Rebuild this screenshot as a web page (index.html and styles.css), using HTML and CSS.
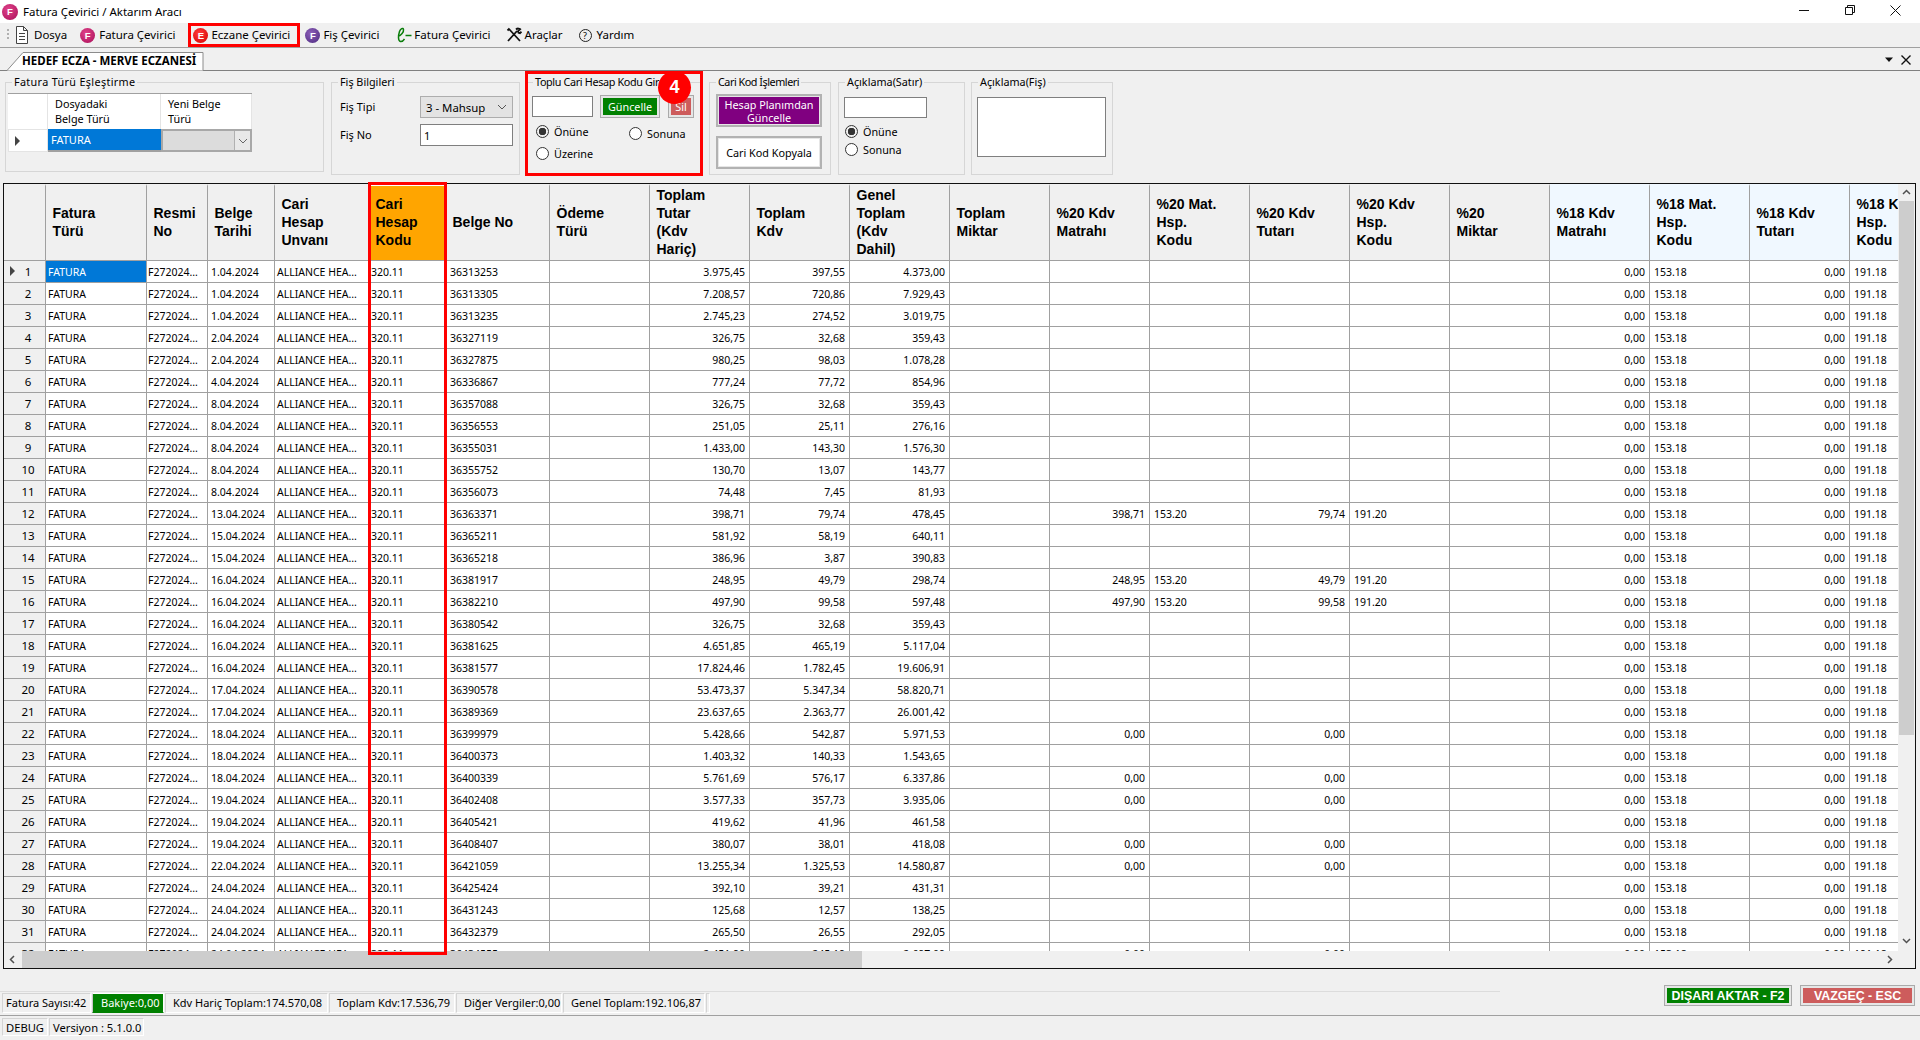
FILE: index.html
```html
<!DOCTYPE html>
<html lang="tr">
<head>
<meta charset="utf-8">
<title>Fatura Çevirici / Aktarım Aracı</title>
<link rel="stylesheet" href="styles.css">
</head>
<body>
<div class="app">
<header class="titlebar">
  <span class="ball ball-f ball-title">F</span>
  <span class="title-text">Fatura Çevirici / Aktarım Aracı</span>
  <div class="winctl">
    <svg width="46" height="20" viewBox="0 0 46 20"><path d="M18 10.5h10" stroke="#111" fill="none"/></svg>
    <svg width="46" height="20" viewBox="0 0 46 20"><path d="M18.5 7.5h7v7h-7zM20.5 7.5v-2h7v7h-2" stroke="#111" fill="none"/></svg>
    <svg width="46" height="20" viewBox="0 0 46 20"><path d="M17.5 5.5l10 10M27.5 5.5l-10 10" stroke="#111" fill="none"/></svg>
  </div>
</header>

<nav class="toolbar">
  <span class="grip"></span>
  <div class="tool tool-doc">
    <svg width="14" height="20" viewBox="0 0 14 20"><path d="M1.5 1.5h7l4 4v13h-11zM8.5 1.5v4h4M4 8.5h6M4 11.5h6M4 14.5h6" fill="#fff" stroke="#444"/></svg>
    <span>Dosya</span>
  </div>
  <div class="tool tool-f"><span class="ball ball-f">F</span><span>Fatura Çevirici</span></div>
  <div class="tool tool-active"><span class="ball ball-e">E</span><span>Eczane Çevirici</span></div>
  <div class="tool tool-p"><span class="ball ball-p">F</span><span>Fiş Çevirici</span></div>
  <div class="tool tool-ef">
    <svg width="18" height="18" viewBox="0 0 18 18"><path d="M3 10.5C6 9.500 9 6 8.500 3.500C8 1.500 5.500 2.500 4.500 5.500C3.200 9.500 2.800 15 5.500 15.500C7 15.700 8.500 14.500 9.500 13M10.500 9.500h6" fill="none" stroke="#0a7d0a" stroke-width="1.500"/></svg>
    <span>Fatura Çevirici</span>
  </div>
  <div class="tool tool-tools">
    <svg width="16" height="16" viewBox="0 0 16 16"><path d="M2 14L11 4M10 2.500c1.500-1.500 3.500-1 4.200-.3l-2.200 2 .5 1.500 1.500.5 1.500-1.500M3 2l11 12M1.500 3.500l2-2" fill="none" stroke="#111" stroke-width="1.800"/></svg>
    <span>Araçlar</span>
  </div>
  <div class="tool tool-help"><span class="help">?</span><span>Yardım</span></div>
</nav>

<div class="tabstrip">
  <div class="tab">
    <svg class="tab-shape" width="197" height="19" viewBox="0 0 197 19"><path d="M0 18.500L16 .5H196V18.500" fill="#fff" stroke="#8c8c8c"/></svg>
    <span class="tab-label">HEDEF ECZA - MERVE ECZANESİ</span>
  </div>
  <div class="tab-tools">
    <svg width="12" height="8" viewBox="0 0 12 8"><path d="M2 1.500h8L6 6z" fill="#111"/></svg>
    <svg width="12" height="12" viewBox="0 0 12 12"><path d="M1.500 1.500l9 9M10.500 1.500l-9 9" stroke="#111" stroke-width="1.400" fill="none"/></svg>
  </div>
</div>

<section class="filters">
  <div class="group g1">
    <span class="legend">Fatura Türü Eşleştirme</span>
    <div class="mini">
      <div class="mini-h"></div>
      <div class="mini-h mini-t">Dosyadaki<br>Belge Türü</div>
      <div class="mini-h mini-t">Yeni Belge<br>Türü</div>
      <div class="mini-r"><span class="cursor"></span></div>
      <div class="mini-sel">FATURA</div>
      <div class="mini-combo"><span class="mini-arrow"><svg width="10" height="6" viewBox="0 0 10 6"><path d="M1 1l4 4 4-4" fill="none" stroke="#666"/></svg></span></div>
    </div>
  </div>

  <div class="group g2">
    <span class="legend">Fiş Bilgileri</span>
    <div class="form">
      <label class="form-label">Fiş Tipi</label>
      <div class="combo"><span>3 - Mahsup</span><svg width="10" height="6" viewBox="0 0 10 6"><path d="M1 1l4 4 4-4" fill="none" stroke="#555"/></svg></div>
      <label class="form-label">Fiş No</label>
      <div class="field field-no">1</div>
    </div>
  </div>

  <div class="group g3">
    <span class="legend">Toplu Cari Hesap Kodu Gir</span>
    <div class="bulk-row">
      <div class="field bulk-input"></div>
      <div class="btn btn-guncelle"><span class="btn-in green">Güncelle</span></div>
      <div class="btn btn-sil"><span class="btn-in red">Sil</span></div>
    </div>
    <div class="radios">
      <div class="radio-line"><span class="radio on"></span><span>Önüne</span></div>
      <div class="radio-line radio-down"><span class="radio"></span><span>Sonuna</span></div>
      <div class="radio-line"><span class="radio"></span><span>Üzerine</span></div>
    </div>
    <span class="mark-box"></span>
    <span class="badge">4</span>
  </div>

  <div class="group g4">
    <span class="legend">Cari Kod İşlemleri</span>
    <div class="btn btn-big"><span class="btn-in purple">Hesap Planımdan<br>Güncelle</span></div>
    <div class="btn btn-big"><span class="btn-in white">Cari Kod Kopyala</span></div>
  </div>

  <div class="group g5">
    <span class="legend">Açıklama(Satır)</span>
    <div class="field satir-input"></div>
    <div class="radio-stack">
      <div class="radio-line"><span class="radio on"></span><span>Önüne</span></div>
      <div class="radio-line"><span class="radio"></span><span>Sonuna</span></div>
    </div>
  </div>

  <div class="group g6">
    <span class="legend">Açıklama(Fiş)</span>
    <div class="field fis-area"></div>
  </div>
</section>

<section class="grid">
  <div class="grid-body">
    <div class="grid-view">
      <table class="table">
        <colgroup><col class="c-rh"><col class="c-a"><col class="c-b"><col class="c-c"><col class="c-d"><col class="c-e"><col class="c-f"><col span="14" class="c-n"></colgroup>
        <thead>
          <tr><th></th><th>Fatura<br>Türü</th><th>Resmi<br>No</th><th>Belge<br>Tarihi</th><th>Cari<br>Hesap<br>Unvanı</th><th class="h-orange">Cari<br>Hesap<br>Kodu</th><th>Belge No</th><th>Ödeme<br>Türü</th><th>Toplam<br>Tutar<br>(Kdv<br>Hariç)</th><th>Toplam<br>Kdv</th><th>Genel<br>Toplam<br>(Kdv<br>Dahil)</th><th>Toplam<br>Miktar</th><th>%20 Kdv<br>Matrahı</th><th>%20 Mat.<br>Hsp.<br>Kodu</th><th>%20 Kdv<br>Tutarı</th><th>%20 Kdv<br>Hsp.<br>Kodu</th><th>%20<br>Miktar</th><th class="h-blue">%18 Kdv<br>Matrahı</th><th class="h-blue">%18 Mat.<br>Hsp.<br>Kodu</th><th class="h-blue">%18 Kdv<br>Tutarı</th><th class="h-blue">%18 Kdv<br>Hsp.<br>Kodu</th></tr>
        </thead>
        <tbody>
<tr><th><span class="cursor"></span>1</th><td class="sel">FATURA</td><td>F272024...</td><td>1.04.2024</td><td>ALLIANCE HEA...</td><td>320.11</td><td>36313253</td><td></td><td>3.975,45</td><td>397,55</td><td>4.373,00</td><td></td><td></td><td></td><td></td><td></td><td></td><td>0,00</td><td>153.18</td><td>0,00</td><td>191.18</td></tr>
<tr><th>2</th><td>FATURA</td><td>F272024...</td><td>1.04.2024</td><td>ALLIANCE HEA...</td><td>320.11</td><td>36313305</td><td></td><td>7.208,57</td><td>720,86</td><td>7.929,43</td><td></td><td></td><td></td><td></td><td></td><td></td><td>0,00</td><td>153.18</td><td>0,00</td><td>191.18</td></tr>
<tr><th>3</th><td>FATURA</td><td>F272024...</td><td>1.04.2024</td><td>ALLIANCE HEA...</td><td>320.11</td><td>36313235</td><td></td><td>2.745,23</td><td>274,52</td><td>3.019,75</td><td></td><td></td><td></td><td></td><td></td><td></td><td>0,00</td><td>153.18</td><td>0,00</td><td>191.18</td></tr>
<tr><th>4</th><td>FATURA</td><td>F272024...</td><td>2.04.2024</td><td>ALLIANCE HEA...</td><td>320.11</td><td>36327119</td><td></td><td>326,75</td><td>32,68</td><td>359,43</td><td></td><td></td><td></td><td></td><td></td><td></td><td>0,00</td><td>153.18</td><td>0,00</td><td>191.18</td></tr>
<tr><th>5</th><td>FATURA</td><td>F272024...</td><td>2.04.2024</td><td>ALLIANCE HEA...</td><td>320.11</td><td>36327875</td><td></td><td>980,25</td><td>98,03</td><td>1.078,28</td><td></td><td></td><td></td><td></td><td></td><td></td><td>0,00</td><td>153.18</td><td>0,00</td><td>191.18</td></tr>
<tr><th>6</th><td>FATURA</td><td>F272024...</td><td>4.04.2024</td><td>ALLIANCE HEA...</td><td>320.11</td><td>36336867</td><td></td><td>777,24</td><td>77,72</td><td>854,96</td><td></td><td></td><td></td><td></td><td></td><td></td><td>0,00</td><td>153.18</td><td>0,00</td><td>191.18</td></tr>
<tr><th>7</th><td>FATURA</td><td>F272024...</td><td>8.04.2024</td><td>ALLIANCE HEA...</td><td>320.11</td><td>36357088</td><td></td><td>326,75</td><td>32,68</td><td>359,43</td><td></td><td></td><td></td><td></td><td></td><td></td><td>0,00</td><td>153.18</td><td>0,00</td><td>191.18</td></tr>
<tr><th>8</th><td>FATURA</td><td>F272024...</td><td>8.04.2024</td><td>ALLIANCE HEA...</td><td>320.11</td><td>36356553</td><td></td><td>251,05</td><td>25,11</td><td>276,16</td><td></td><td></td><td></td><td></td><td></td><td></td><td>0,00</td><td>153.18</td><td>0,00</td><td>191.18</td></tr>
<tr><th>9</th><td>FATURA</td><td>F272024...</td><td>8.04.2024</td><td>ALLIANCE HEA...</td><td>320.11</td><td>36355031</td><td></td><td>1.433,00</td><td>143,30</td><td>1.576,30</td><td></td><td></td><td></td><td></td><td></td><td></td><td>0,00</td><td>153.18</td><td>0,00</td><td>191.18</td></tr>
<tr><th>10</th><td>FATURA</td><td>F272024...</td><td>8.04.2024</td><td>ALLIANCE HEA...</td><td>320.11</td><td>36355752</td><td></td><td>130,70</td><td>13,07</td><td>143,77</td><td></td><td></td><td></td><td></td><td></td><td></td><td>0,00</td><td>153.18</td><td>0,00</td><td>191.18</td></tr>
<tr><th>11</th><td>FATURA</td><td>F272024...</td><td>8.04.2024</td><td>ALLIANCE HEA...</td><td>320.11</td><td>36356073</td><td></td><td>74,48</td><td>7,45</td><td>81,93</td><td></td><td></td><td></td><td></td><td></td><td></td><td>0,00</td><td>153.18</td><td>0,00</td><td>191.18</td></tr>
<tr><th>12</th><td>FATURA</td><td>F272024...</td><td>13.04.2024</td><td>ALLIANCE HEA...</td><td>320.11</td><td>36363371</td><td></td><td>398,71</td><td>79,74</td><td>478,45</td><td></td><td>398,71</td><td>153.20</td><td>79,74</td><td>191.20</td><td></td><td>0,00</td><td>153.18</td><td>0,00</td><td>191.18</td></tr>
<tr><th>13</th><td>FATURA</td><td>F272024...</td><td>15.04.2024</td><td>ALLIANCE HEA...</td><td>320.11</td><td>36365211</td><td></td><td>581,92</td><td>58,19</td><td>640,11</td><td></td><td></td><td></td><td></td><td></td><td></td><td>0,00</td><td>153.18</td><td>0,00</td><td>191.18</td></tr>
<tr><th>14</th><td>FATURA</td><td>F272024...</td><td>15.04.2024</td><td>ALLIANCE HEA...</td><td>320.11</td><td>36365218</td><td></td><td>386,96</td><td>3,87</td><td>390,83</td><td></td><td></td><td></td><td></td><td></td><td></td><td>0,00</td><td>153.18</td><td>0,00</td><td>191.18</td></tr>
<tr><th>15</th><td>FATURA</td><td>F272024...</td><td>16.04.2024</td><td>ALLIANCE HEA...</td><td>320.11</td><td>36381917</td><td></td><td>248,95</td><td>49,79</td><td>298,74</td><td></td><td>248,95</td><td>153.20</td><td>49,79</td><td>191.20</td><td></td><td>0,00</td><td>153.18</td><td>0,00</td><td>191.18</td></tr>
<tr><th>16</th><td>FATURA</td><td>F272024...</td><td>16.04.2024</td><td>ALLIANCE HEA...</td><td>320.11</td><td>36382210</td><td></td><td>497,90</td><td>99,58</td><td>597,48</td><td></td><td>497,90</td><td>153.20</td><td>99,58</td><td>191.20</td><td></td><td>0,00</td><td>153.18</td><td>0,00</td><td>191.18</td></tr>
<tr><th>17</th><td>FATURA</td><td>F272024...</td><td>16.04.2024</td><td>ALLIANCE HEA...</td><td>320.11</td><td>36380542</td><td></td><td>326,75</td><td>32,68</td><td>359,43</td><td></td><td></td><td></td><td></td><td></td><td></td><td>0,00</td><td>153.18</td><td>0,00</td><td>191.18</td></tr>
<tr><th>18</th><td>FATURA</td><td>F272024...</td><td>16.04.2024</td><td>ALLIANCE HEA...</td><td>320.11</td><td>36381625</td><td></td><td>4.651,85</td><td>465,19</td><td>5.117,04</td><td></td><td></td><td></td><td></td><td></td><td></td><td>0,00</td><td>153.18</td><td>0,00</td><td>191.18</td></tr>
<tr><th>19</th><td>FATURA</td><td>F272024...</td><td>16.04.2024</td><td>ALLIANCE HEA...</td><td>320.11</td><td>36381577</td><td></td><td>17.824,46</td><td>1.782,45</td><td>19.606,91</td><td></td><td></td><td></td><td></td><td></td><td></td><td>0,00</td><td>153.18</td><td>0,00</td><td>191.18</td></tr>
<tr><th>20</th><td>FATURA</td><td>F272024...</td><td>17.04.2024</td><td>ALLIANCE HEA...</td><td>320.11</td><td>36390578</td><td></td><td>53.473,37</td><td>5.347,34</td><td>58.820,71</td><td></td><td></td><td></td><td></td><td></td><td></td><td>0,00</td><td>153.18</td><td>0,00</td><td>191.18</td></tr>
<tr><th>21</th><td>FATURA</td><td>F272024...</td><td>17.04.2024</td><td>ALLIANCE HEA...</td><td>320.11</td><td>36389369</td><td></td><td>23.637,65</td><td>2.363,77</td><td>26.001,42</td><td></td><td></td><td></td><td></td><td></td><td></td><td>0,00</td><td>153.18</td><td>0,00</td><td>191.18</td></tr>
<tr><th>22</th><td>FATURA</td><td>F272024...</td><td>18.04.2024</td><td>ALLIANCE HEA...</td><td>320.11</td><td>36399979</td><td></td><td>5.428,66</td><td>542,87</td><td>5.971,53</td><td></td><td>0,00</td><td></td><td>0,00</td><td></td><td></td><td>0,00</td><td>153.18</td><td>0,00</td><td>191.18</td></tr>
<tr><th>23</th><td>FATURA</td><td>F272024...</td><td>18.04.2024</td><td>ALLIANCE HEA...</td><td>320.11</td><td>36400373</td><td></td><td>1.403,32</td><td>140,33</td><td>1.543,65</td><td></td><td></td><td></td><td></td><td></td><td></td><td>0,00</td><td>153.18</td><td>0,00</td><td>191.18</td></tr>
<tr><th>24</th><td>FATURA</td><td>F272024...</td><td>18.04.2024</td><td>ALLIANCE HEA...</td><td>320.11</td><td>36400339</td><td></td><td>5.761,69</td><td>576,17</td><td>6.337,86</td><td></td><td>0,00</td><td></td><td>0,00</td><td></td><td></td><td>0,00</td><td>153.18</td><td>0,00</td><td>191.18</td></tr>
<tr><th>25</th><td>FATURA</td><td>F272024...</td><td>19.04.2024</td><td>ALLIANCE HEA...</td><td>320.11</td><td>36402408</td><td></td><td>3.577,33</td><td>357,73</td><td>3.935,06</td><td></td><td>0,00</td><td></td><td>0,00</td><td></td><td></td><td>0,00</td><td>153.18</td><td>0,00</td><td>191.18</td></tr>
<tr><th>26</th><td>FATURA</td><td>F272024...</td><td>19.04.2024</td><td>ALLIANCE HEA...</td><td>320.11</td><td>36405421</td><td></td><td>419,62</td><td>41,96</td><td>461,58</td><td></td><td></td><td></td><td></td><td></td><td></td><td>0,00</td><td>153.18</td><td>0,00</td><td>191.18</td></tr>
<tr><th>27</th><td>FATURA</td><td>F272024...</td><td>19.04.2024</td><td>ALLIANCE HEA...</td><td>320.11</td><td>36408407</td><td></td><td>380,07</td><td>38,01</td><td>418,08</td><td></td><td>0,00</td><td></td><td>0,00</td><td></td><td></td><td>0,00</td><td>153.18</td><td>0,00</td><td>191.18</td></tr>
<tr><th>28</th><td>FATURA</td><td>F272024...</td><td>22.04.2024</td><td>ALLIANCE HEA...</td><td>320.11</td><td>36421059</td><td></td><td>13.255,34</td><td>1.325,53</td><td>14.580,87</td><td></td><td>0,00</td><td></td><td>0,00</td><td></td><td></td><td>0,00</td><td>153.18</td><td>0,00</td><td>191.18</td></tr>
<tr><th>29</th><td>FATURA</td><td>F272024...</td><td>24.04.2024</td><td>ALLIANCE HEA...</td><td>320.11</td><td>36425424</td><td></td><td>392,10</td><td>39,21</td><td>431,31</td><td></td><td></td><td></td><td></td><td></td><td></td><td>0,00</td><td>153.18</td><td>0,00</td><td>191.18</td></tr>
<tr><th>30</th><td>FATURA</td><td>F272024...</td><td>24.04.2024</td><td>ALLIANCE HEA...</td><td>320.11</td><td>36431243</td><td></td><td>125,68</td><td>12,57</td><td>138,25</td><td></td><td></td><td></td><td></td><td></td><td></td><td>0,00</td><td>153.18</td><td>0,00</td><td>191.18</td></tr>
<tr><th>31</th><td>FATURA</td><td>F272024...</td><td>24.04.2024</td><td>ALLIANCE HEA...</td><td>320.11</td><td>36432379</td><td></td><td>265,50</td><td>26,55</td><td>292,05</td><td></td><td></td><td></td><td></td><td></td><td></td><td>0,00</td><td>153.18</td><td>0,00</td><td>191.18</td></tr>
<tr><th>32</th><td>FATURA</td><td>F272024...</td><td>24.04.2024</td><td>ALLIANCE HEA...</td><td>320.11</td><td>36434555</td><td></td><td>2.451,90</td><td>245,19</td><td>2.697,09</td><td></td><td>0,00</td><td></td><td>0,00</td><td></td><td></td><td>0,00</td><td>153.18</td><td>0,00</td><td>191.18</td></tr>
        </tbody>
      </table>
    </div>
    <div class="vscroll">
      <svg class="sb-btn" width="17" height="17" viewBox="0 0 17 17"><path d="M5 10l3.500-3.500L12 10" fill="none" stroke="#505050" stroke-width="1.500"/></svg>
      <div class="vthumb"></div>
      <svg class="sb-btn sb-end" width="17" height="17" viewBox="0 0 17 17"><path d="M5 7l3.500 3.500L12 7" fill="none" stroke="#505050" stroke-width="1.500"/></svg>
    </div>
  </div>
  <div class="hscroll">
    <svg class="sb-btn" width="17" height="17" viewBox="0 0 17 17"><path d="M10 5L6.500 8.500 10 12" fill="none" stroke="#505050" stroke-width="1.500"/></svg>
    <div class="hthumb"></div>
    <svg class="sb-btn sb-right" width="17" height="17" viewBox="0 0 17 17"><path d="M7 5l3.500 3.500L7 12" fill="none" stroke="#505050" stroke-width="1.500"/></svg>
  </div>
  <span class="col-mark"></span>
</section>

<footer class="summary">
  <div class="stats">
    <span class="stat s1">Fatura Sayısı:42</span>
    <span class="stat s2">Bakiye:0,00</span>
    <span class="stat s3">Kdv Hariç Toplam:174.570,08</span>
    <span class="stat s4">Toplam Kdv:17.536,79</span>
    <span class="stat s5">Diğer Vergiler:0,00</span>
    <span class="stat s6">Genel Toplam:192.106,87</span>
    <span class="stat s7"></span>
  </div>
  <div class="actions">
    <div class="btn btn-aktar"><span class="btn-in green">DIŞARI AKTAR - F2</span></div>
    <div class="btn btn-vazgec"><span class="btn-in red">VAZGEÇ - ESC</span></div>
  </div>
</footer>

<div class="statusbar">
  <span class="stat b1">DEBUG</span>
  <span class="stat b2">Versiyon : 5.1.0.0</span>
</div>
</div>
</body>
</html>
```
FILE: styles.css
```css
* { box-sizing: border-box; }
html, body { margin: 0; padding: 0; height: 100%; overflow: hidden; }
body { font-family: "Noto Sans", "DejaVu Sans", sans-serif; font-size: 10.5px; color: #000; background: #f0f0f0; }
.app { width: 1920px; height: 1040px; display: flex; flex-direction: column; background: #f0f0f0; }

.titlebar { height: 23px; background: #fff; display: flex; align-items: center; padding-left: 2px; }
.title-text { margin-left: 5px; font-size: 11.500px; }
.winctl { margin-left: auto; display: flex; padding-right: 1px; margin-top: -3px; }

.ball { display: inline-flex; align-items: center; justify-content: center; width: 15px; height: 15px; border-radius: 50%; color: #fff; font: bold 9.500px "Liberation Sans", sans-serif; flex: none; }
.ball-title { width: 16px; height: 16px; }
.ball-f { background: radial-gradient(circle at 40% 35%, #e0428a, #a90f58); }
.ball-e { background: radial-gradient(circle at 40% 35%, #ff3b3b, #d40000); }
.ball-p { background: radial-gradient(circle at 40% 35%, #8d5fb8, #4c2a80); }

.toolbar { height: 24px; display: flex; align-items: center; font-size: 11.500px; }
.grip { width: 2px; height: 12px; margin-left: 7px; background: repeating-linear-gradient(#b0b0b0 0 2px, transparent 2px 4px); }
.tool { display: flex; align-items: center; height: 24px; gap: 4px; }
.tool > span:last-child { padding-bottom: 2px; }
.tool-doc { margin-left: 6px; gap: 5px; }
.tool-f { margin-left: 13px; }
.tool-active { margin-left: 13px; width: 112px; border: 3px solid #f00; padding-left: 2px; gap: 3px; }
.tool-p { margin-left: 5px; gap: 3px; }
.tool-ef { margin-left: 16px; gap: 1px; }
.tool-tools { margin-left: 15px; gap: 3px; }
.tool-help { margin-left: 16px; gap: 5px; }
.help { width: 13px; height: 13px; border: 1px solid #222; border-radius: 50%; display: inline-flex; align-items: center; justify-content: center; font-size: 9px; }

.tabstrip { height: 24px; border-top: 1px solid #a0a0a0; border-bottom: 1px solid #808080; display: flex; align-items: flex-end; padding-left: 7px; position: relative; }
.tab { position: relative; width: 197px; height: 19px; margin-bottom: -1px; padding: 0 0 2px 15px; display: flex; align-items: center; }
.tab-shape { position: absolute; left: 0; top: 0; }
.tab-label { position: relative; font-weight: 700; font-size: 11.500px; white-space: nowrap; }
.tab-tools { margin-left: auto; display: flex; align-items: center; gap: 5px; padding: 2px 8px 0 0; height: 22px; }

.filters { height: 112px; display: flex; padding: 11px 0 0 5px; font-size: 10.800px; }
.group { position: relative; height: 93px; border: 1px solid #d6d6d6; flex: none; }
.legend { position: absolute; top: -8px; left: 6px; padding: 0 2px; background: #f0f0f0; white-space: nowrap; line-height: 14px; }
.g1 .legend { letter-spacing: .34px; }
.g3 .legend { letter-spacing: -.35px; }
.g4 .legend { letter-spacing: -.47px; }

.g1 { width: 319px; height: 90px; padding: 10px 0 0 2px; }
.mini { display: grid; grid-template-columns: 40px 113px 91px; grid-template-rows: 35px 23px; width: 244px; border-top: 1px solid #a0a0a0; }
.mini-h { background: #fff; border-right: 1px solid #e4e4e4; }
.mini-t { padding: 3px 0 0 7px; line-height: 14.500px; }
.mini-r { background: #fff; border: 1px solid #e4e4e4; position: relative; display: flex; align-items: center; padding-left: 6px; }
.mini-sel { background: #0078d7; color: #fff; display: flex; align-items: center; padding-left: 3px; font-size: 11px; border-bottom: 2px solid #a0a0a0; }
.mini-combo { background: #dcdcdc; border: 2px solid #a8a8a8; display: flex; justify-content: flex-end; }
.mini-arrow { width: 16px; background: #e8e8e8; border-left: 1px solid #b0b0b0; display: flex; align-items: center; justify-content: center; }
.cursor { width: 0; height: 0; border-left: 5px solid #444; border-top: 5px solid transparent; border-bottom: 5px solid transparent; }

.g2 { margin-left: 7px; width: 189px; padding: 13px 0 0 8px; }
.form { display: grid; grid-template-columns: 80px 93px; grid-template-rows: 22px 22px; row-gap: 6px; align-items: center; }
.form-label { font-size: 11px; padding-bottom: 2px; }
.combo { height: 22px; background: #e3e3e3; border: 1px solid #adadad; display: flex; align-items: center; justify-content: space-between; padding: 0 5px; font-size: 11.400px; }
.field { background: #fff; border: 1px solid #7f7f7f; }
.field-no { height: 22px; display: flex; align-items: center; padding-left: 3px; font-size: 11px; }

.g3 { margin-left: 6px; width: 176px; padding: 12px 0 0 5px; }
.bulk-row { display: flex; align-items: center; height: 23px; }
.bulk-input { width: 61px; height: 21px; }
.btn { border: 1px solid #aaa; padding: 2px; background: #e6e6e6; display: flex; flex: none; }
.btn-in { flex: 1; display: flex; align-items: center; justify-content: center; text-align: center; line-height: 13px; }
.green { background: #008000; color: #fff; }
.red { background: #cd5c5c; color: #fff; }
.purple { background: #800080; color: #fff; }
.white { background: #fff; }
.btn-guncelle { width: 60px; height: 23px; margin-left: 7px; }
.btn-sil { width: 26px; height: 23px; margin-left: 8px; }
.radios { display: grid; grid-template-columns: 93px auto; grid-auto-rows: 22px; margin: 6px 0 0 4px; }
.radio-line { display: flex; align-items: center; gap: 5px; height: 14px; }
.radio-down { margin-top: 2px; }
.radio { width: 13px; height: 13px; border: 1px solid #333; border-radius: 50%; background: #fff; flex: none; }
.radio.on { background: radial-gradient(circle, #333 0 3.500px, #f0f0f0 4px); }
.mark-box { position: absolute; left: -2px; right: -2px; top: -12px; bottom: -2px; border: 3px solid #f00; pointer-events: none; }
.badge { position: absolute; left: 131px; top: -12px; width: 33px; height: 33px; border-radius: 50%; background: #f00; color: #fff; font: bold 18px "Liberation Sans", sans-serif; display: flex; align-items: center; justify-content: center; }

.g4 { margin-left: 7px; width: 122px; padding: 11px 0 0 6px; display: flex; flex-direction: column; gap: 9px; }
.btn-big { width: 106px; height: 33px; border: 2px solid #b2b2b2; padding: 1px; }

.g5 { margin-left: 7px; width: 127px; padding: 14px 0 0 5px; }
.satir-input { width: 83px; height: 21px; }
.radio-stack { margin-top: 6px; display: grid; grid-auto-rows: 18px; padding-left: 1px; }

.g6 { margin-left: 6px; width: 142px; padding: 14px 0 0 5px; }
.fis-area { width: 129px; height: 60px; }

.grid { position: relative; height: 786px; margin: 0 4px 0 3px; border: 1px solid #111; background: #f0f0f0; display: flex; flex-direction: column; flex: none; }
.grid-body { height: 767px; display: flex; flex: none; }
.grid-view { width: 1894px; overflow: hidden; flex: none; background: #fff; }
.table { border-collapse: separate; border-spacing: 0; table-layout: fixed; width: 1946px; }
.c-rh { width: 42px; } .c-a { width: 101px; } .c-b { width: 61px; } .c-c { width: 67px; } .c-d { width: 94px; } .c-e { width: 77px; } .c-f { width: 104px; } .c-n { width: 100px; }
.table thead th { height: 77px; padding: 0 2px 2px 6.500px; background: #f0f0f0; text-align: left; vertical-align: middle; font: bold 14px/18px "Liberation Sans", Arial, sans-serif; border-top: 2px solid #f0f0f0; border-right: 1px solid #a0a0a0; border-bottom: 1px solid #a0a0a0; overflow: hidden; white-space: nowrap; }
.table thead .h-orange { background: #ffa500; border-top-color: #fff; }
.table thead .h-blue { background: #f0f8ff; border-top-color: #f0f8ff; }
.table tbody tr { height: 22px; }
.table tbody th { position: relative; font-weight: 400; font-size: 11.500px; background: #f0f0f0; border-right: 1px solid #a0a0a0; border-bottom: 1px solid #a0a0a0; text-align: center; padding: 0 0 0 7px; }
.table tbody th .cursor { position: absolute; left: 6px; top: 5px; }
.table td { height: 22px; padding: 0 4px; border-right: 1px solid #a0a0a0; border-bottom: 1px solid #a0a0a0; white-space: nowrap; overflow: hidden; background: #fff; }
.table td:nth-child(2), .table td:nth-child(5), .table td:nth-child(6) { padding-left: 2px; }
.table td:nth-child(3) { padding-left: 1px; }
.table td:nth-child(4) { padding-left: 3px; }
.table td:nth-child(9), .table td:nth-child(10), .table td:nth-child(11), .table td:nth-child(13), .table td:nth-child(15), .table td:nth-child(18), .table td:nth-child(20) { text-align: right; }
.table td.sel { background: #0078d7; color: #fff; }

.vscroll { width: 17px; background: #f0f0f0; display: flex; flex-direction: column; }
.sb-btn { flex: none; display: block; }
.vthumb { width: 15px; height: 534px; margin-left: 1px; background: #cdcdcd; }
.sb-end { margin-top: auto; margin-bottom: 2px; }
.hscroll { height: 17px; background: #f0f0f0; display: flex; }
.hthumb { width: 840px; background: #cdcdcd; margin: 0 0 0 1px; }
.sb-right { margin-left: auto; margin-right: 17px; }
.col-mark { position: absolute; left: 364px; top: -2px; width: 79px; height: 773px; border: 3px solid #f00; pointer-events: none; }

.summary { height: 47px; display: flex; justify-content: space-between; align-items: flex-start; border-bottom: 1px solid #a0a0a0; flex: none; font-size: 11px; }
.stats { margin-top: 22px; width: 1500px; border-top: 1px solid #dcdcdc; padding: 1px 0 0 2px; display: flex; gap: 1px; height: 23px; }
.stat { height: 20px; display: flex; align-items: center; flex: none; white-space: nowrap; padding: 0 0 2px 7px; border: 1px solid; border-color: #d4d4d4 #fff #fff #d4d4d4; }
.s1 { width: 89px; padding-left: 3px; }
.s2 { width: 72px; padding-left: 8px; background: #008000; color: #fff; border-color: #fff #fff #008000 #c8c8c8; }
.s3 { width: 163px; }
.s4 { width: 126px; }
.s5 { width: 106px; }
.s6 { width: 142px; }
.s7 { width: 4px; padding: 0; }
.actions { display: flex; gap: 8px; margin-top: 16px; padding-right: 5px; }
.btn-aktar { width: 128px; height: 21px; }
.btn-vazgec { width: 115px; height: 21px; }
.actions .btn-in { font: bold 12.400px "Liberation Sans", Arial, sans-serif; }

.statusbar { height: 24px; display: flex; gap: 1px; padding: 2px 0 0 2px; font-size: 11.200px; }
.statusbar .stat { padding: 0 0 0 3px; }
.b1 { width: 46px; height: 18px; }
.b2 { width: 95px; height: 18px; }
```
